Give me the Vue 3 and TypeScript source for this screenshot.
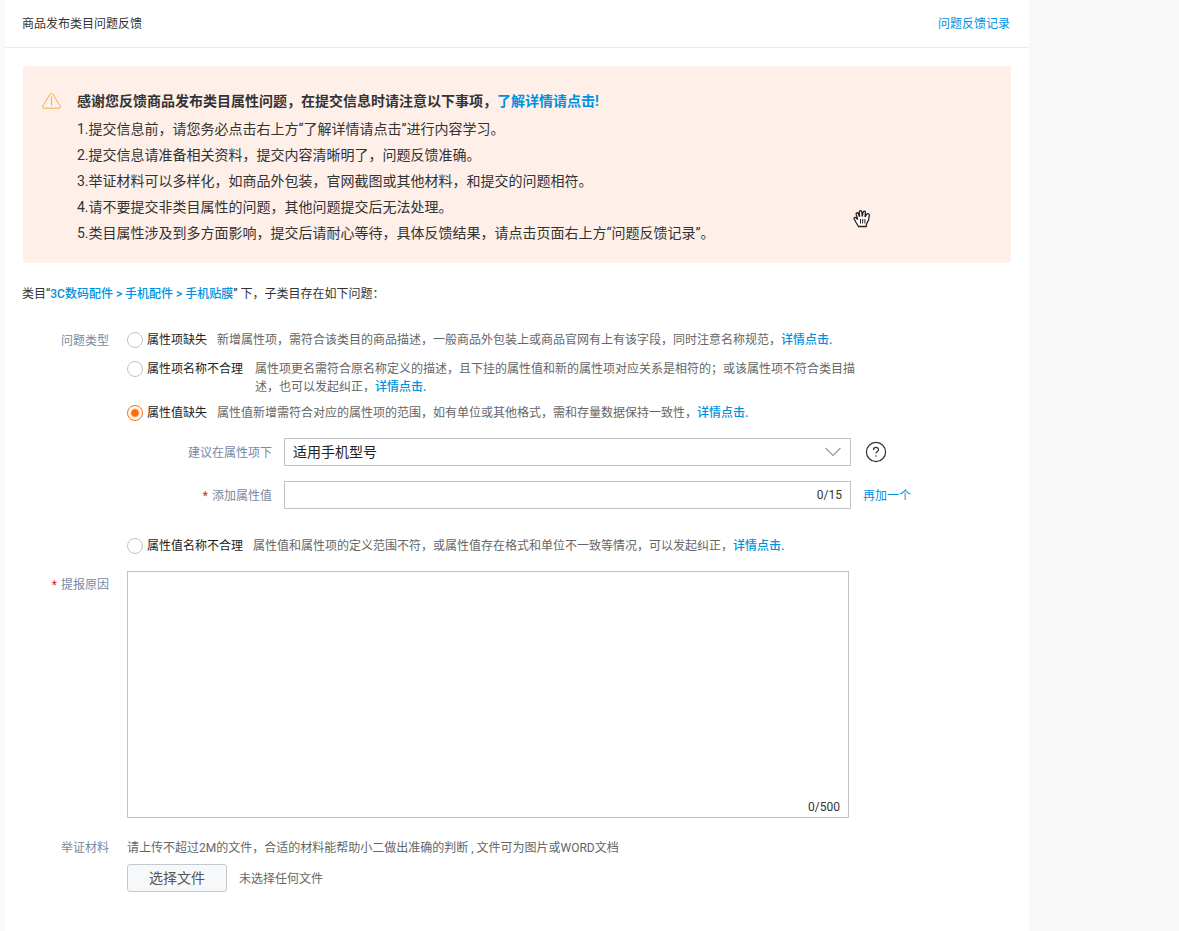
<script setup lang="ts">
import { ref } from 'vue'

interface IssueType {
  id: string
  name: string
  hint: string
}

const notices: string[] = [
  '1.提交信息前，请您务必点击右上方“了解详情请点击”进行内容学习。',
  '2.提交信息请准备相关资料，提交内容清晰明了，问题反馈准确。',
  '3.举证材料可以多样化，如商品外包装，官网截图或其他材料，和提交的问题相符。',
  '4.请不要提交非类目属性的问题，其他问题提交后无法处理。',
  '5.类目属性涉及到多方面影响，提交后请耐心等待，具体反馈结果，请点击页面右上方“问题反馈记录”。',
]

const issueTypes: IssueType[] = [
  { id: 'item-missing', name: '属性项缺失', hint: '新增属性项，需符合该类目的商品描述，一般商品外包装上或商品官网有上有该字段，同时注意名称规范，' },
  { id: 'item-name', name: '属性项名称不合理', hint: '属性项更名需符合原名称定义的描述，且下挂的属性值和新的属性项对应关系是相符的；或该属性项不符合类目描述，也可以发起纠正，' },
  { id: 'value-missing', name: '属性值缺失', hint: '属性值新增需符合对应的属性项的范围，如有单位或其他格式，需和存量数据保持一致性，' },
  { id: 'value-name', name: '属性值名称不合理', hint: '属性值和属性项的定义范围不符，或属性值存在格式和单位不一致等情况，可以发起纠正，' },
]

const selected = ref('value-missing')
const attribute = ref('适用手机型号')
const newValue = ref('')
const reason = ref('')
</script>

<template>
  <main class="panel">
    <header class="top">
      <h1>商品发布类目问题反馈</h1>
      <a href="#records">问题反馈记录</a>
    </header>

    <section class="notice">
      <svg class="warn" viewBox="0 0 20 18" aria-hidden="true">
        <path d="M8.6 2.2Q10 .5 11.3 2.2L18.7 14Q19.6 16 17.7 16.2H2.3Q.4 16 1.3 14Z" />
        <path d="M10 4.500v9" />
      </svg>
      <div>
        <h2>感谢您反馈商品发布类目属性问题，在提交信息时请注意以下事项，<a href="#guide">了解详情请点击!</a></h2>
        <p v-for="line in notices" :key="line">{{ line }}</p>
      </div>
      <svg class="hand" viewBox="0 0 18 20" aria-hidden="true">
        <path d="M5.500 17.500 2.800 13 1.200 10C.600 8.700 2 7.800 3 8.700L4.700 10.500 3.200 5.400C2.800 3.600 4.900 3.100 5.400 4.800L6.500 7.800 6.300 3.200C6.300 1.200 8.600 1.200 8.800 3L9.200 7.500 10.100 3.200C10.500 1.500 12.600 1.800 12.400 3.600L12 8 13.600 5.300C14.600 3.900 16.700 4.800 16.200 6.500L15.600 11 13.700 14.500 13.200 17.500Z" />
        <path class="lines" d="M7.500 10v4.500M9.700 10v4.500M11.900 10v4.500" />
      </svg>
    </section>

    <p class="category">类目“<a href="#category">3C数码配件 &gt; 手机配件 &gt; 手机贴膜</a>” 下，子类目存在如下问题：</p>

    <form class="form" @submit.prevent>
      <span id="type-label" class="label">问题类型</span>
      <div class="types" role="radiogroup" aria-labelledby="type-label">
        <div v-for="type in issueTypes" :key="type.id" class="type">
          <div class="option">
            <input :id="type.id" v-model="selected" type="radio" name="issue" :value="type.id" />
            <label :for="type.id">{{ type.name }}</label>
            <p class="hint">{{ type.hint }}<a href="#detail">详情点击.</a></p>
          </div>
          <div v-if="type.id === 'value-missing' && selected === type.id" class="sub">
            <label class="label" for="attribute">建议在属性项下</label>
            <div class="field">
              <select id="attribute" v-model="attribute">
                <option>适用手机型号</option>
              </select>
              <svg class="arrow" viewBox="0 0 16 10" aria-hidden="true"><path d="m.5 1 7.500 7.500L15.500 1" /></svg>
            </div>
            <button class="help" type="button" aria-label="帮助">
              <svg viewBox="0 0 22 22" aria-hidden="true">
                <circle cx="11" cy="11" r="9.600" />
                <path d="M8.500 8.900C8.500 5.600 13.500 5.600 13.500 8.700 13.500 10.500 11 10.600 11 12.600M11 14.200v1.500" />
              </svg>
            </button>
            <label class="label" for="new-value"><i>*</i>添加属性值</label>
            <div class="field">
              <input id="new-value" v-model="newValue" type="text" maxlength="15" />
              <span class="count">{{ newValue.length }}/15</span>
            </div>
            <a class="more" href="#add">再加一个</a>
          </div>
        </div>
      </div>

      <label class="label reason-label" for="reason"><i>*</i>提报原因</label>
      <div class="field reason">
        <textarea id="reason" v-model="reason" maxlength="500"></textarea>
        <span class="count">{{ reason.length }}/500</span>
      </div>

      <span id="file-label" class="label">举证材料</span>
      <div class="upload">
        <p>请上传不超过2M的文件，合适的材料能帮助小二做出准确的判断 , 文件可为图片或WORD文档</p>
        <div class="file">
          <button type="button" aria-describedby="file-label">选择文件</button>
          <span>未选择任何文件</span>
        </div>
      </div>
    </form>
  </main>
</template>

<style>
body {
  background: #f9f9f9;
}
</style>

<style scoped>
.panel {
  box-sizing: border-box;
  min-height: 100vh;
  margin: 0 150px 0 5px;
  background: #fff;
  color: #333;
  font: 12px/18px Roboto, "Noto Sans CJK SC", sans-serif;
}
h1, h2, p {
  margin: 0;
}
a {
  color: #0091e0;
  text-decoration: none;
}
input, select, textarea, button {
  box-sizing: border-box;
  margin: 0;
  font: inherit;
  color: inherit;
}
.top {
  display: flex;
  align-items: center;
  justify-content: space-between;
  padding: 15px 19px 14px 17px;
  border-bottom: 1px solid #ebebeb;
}
h1 {
  font-size: 12px;
  font-weight: 400;
}
.notice {
  position: relative;
  display: flex;
  gap: 15px;
  margin: 18px 18px 0;
  padding: 20px 18px 17px;
  border-radius: 3px;
  background: #feefe8;
  font-size: 14px;
  line-height: 26px;
}
.notice h2 {
  padding: 2px 0;
  font-size: 14px;
  font-weight: 700;
}
.warn {
  width: 21px;
  height: 18px;
  margin-top: 6px;
  fill: none;
  stroke: #f7a94c;
}
.hand {
  position: absolute;
  top: 143px;
  right: 140px;
  width: 18px;
  height: 20px;
  fill: #fff;
  stroke: #222;
  stroke-width: 1.3;
}
.hand .lines {
  stroke-width: 1;
}
.category {
  margin: 22px 17px 0;
}
.category a, .hint a {
  font-weight: 500;
}
.form {
  display: grid;
  grid-template-columns: 104px minmax(0, 1fr);
  column-gap: 18px;
  margin-top: 28px;
  padding-bottom: 32px;
}
.label {
  color: #7888a3;
  text-align: right;
}
#type-label {
  padding-top: 1px;
}
.label i {
  margin-right: 4px;
  color: #e8202c;
  font-style: normal;
}
.type {
  margin-bottom: 11px;
}
.type:nth-child(2) {
  margin-bottom: 8px;
}
.type:last-child {
  margin-bottom: 16px;
}
.option {
  display: flex;
  align-items: flex-start;
  max-width: 736px;
}
.option label {
  flex: none;
  margin: 0 10px 0 4px;
  color: #222;
}
.hint {
  color: #666;
}
.type:nth-child(2) .hint {
  padding-left: 2px;
}
.option input {
  appearance: none;
  flex: none;
  width: 16px;
  height: 16px;
  margin-top: 1px;
  border: 1px solid #c0c2c8;
  border-radius: 50%;
  background: #fff;
}
.option input:checked {
  border-color: #ff6a0a;
  background: radial-gradient(circle, #ff6a0a 3px, #fff 5px);
}
.sub {
  display: grid;
  grid-template-columns: 145px 567px auto;
  justify-content: start;
  align-items: center;
  column-gap: 12px;
  row-gap: 15px;
  margin: 16px 0 28px;
}
.sub .label, .more {
  padding-top: 2px;
}
.field {
  position: relative;
  display: flex;
}
.field select, .field input {
  appearance: none;
  width: 100%;
  height: 28px;
  padding: 0 8px;
  border: 1px solid #c0c2c8;
  border-radius: 0;
  background: #fff;
  color: #222;
  font-size: 14px;
}
.arrow {
  position: absolute;
  top: 9px;
  right: 10px;
  width: 16px;
  height: 10px;
  fill: none;
  stroke: #999;
  stroke-width: 1.2;
  pointer-events: none;
}
.count {
  position: absolute;
  right: 9px;
  bottom: 5px;
}
.help {
  width: 22px;
  height: 22px;
  margin-left: 2px;
  padding: 0;
  border: 0;
  background: none;
}
.help svg {
  display: block;
  fill: none;
  stroke: #333;
  stroke-width: 1.2;
}
.reason-label {
  margin-top: 5px;
}
.reason {
  width: 722px;
  max-width: 100%;
  height: 247px;
  margin-bottom: 21px;
}
.reason .count {
  bottom: 2px;
}
textarea {
  width: 100%;
  padding: 8px;
  border: 1px solid #c0c2c8;
  border-radius: 0;
  resize: none;
}
.upload {
  color: #666;
}
.file {
  display: flex;
  align-items: center;
  gap: 12px;
  margin-top: 7px;
}
.file span {
  padding-top: 2px;
}
.file button {
  width: 100px;
  height: 28px;
  padding: 0;
  border: 1px solid #c3c7d0;
  border-radius: 3px;
  background: #f7f8fa;
  color: #555;
  font-size: 14px;
}
</style>
